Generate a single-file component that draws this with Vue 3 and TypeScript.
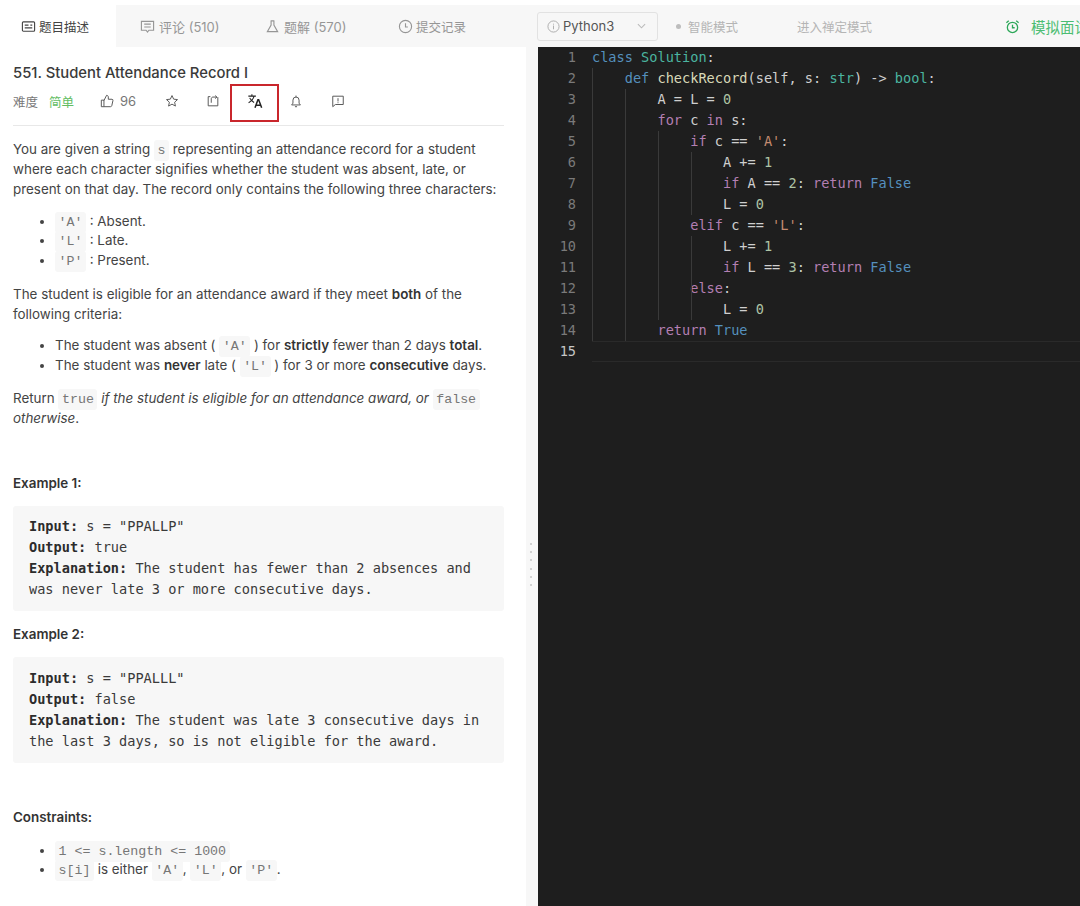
<script setup lang="ts">
interface Tok { t: string; c?: string }
const code: Tok[][] = [
  [{ t: 'class ', c: 'kw' }, { t: 'Solution', c: 'cls' }, { t: ':' }],
  [{ t: '    ' }, { t: 'def ', c: 'kw' }, { t: 'checkRecord', c: 'fn' }, { t: '(self, s: ' }, { t: 'str', c: 'cls' }, { t: ') -> ' }, { t: 'bool', c: 'cls' }, { t: ':' }],
  [{ t: '        A = L = ' }, { t: '0', c: 'num' }],
  [{ t: '        ' }, { t: 'for ', c: 'ctl' }, { t: 'c ' }, { t: 'in ', c: 'ctl' }, { t: 's:' }],
  [{ t: '            ' }, { t: 'if ', c: 'ctl' }, { t: 'c == ' }, { t: "'A'", c: 'str' }, { t: ':' }],
  [{ t: '                A += ' }, { t: '1', c: 'num' }],
  [{ t: '                ' }, { t: 'if ', c: 'ctl' }, { t: 'A == ' }, { t: '2', c: 'num' }, { t: ': ' }, { t: 'return ', c: 'ctl' }, { t: 'False', c: 'kw' }],
  [{ t: '                L = ' }, { t: '0', c: 'num' }],
  [{ t: '            ' }, { t: 'elif ', c: 'ctl' }, { t: 'c == ' }, { t: "'L'", c: 'str' }, { t: ':' }],
  [{ t: '                L += ' }, { t: '1', c: 'num' }],
  [{ t: '                ' }, { t: 'if ', c: 'ctl' }, { t: 'L == ' }, { t: '3', c: 'num' }, { t: ': ' }, { t: 'return ', c: 'ctl' }, { t: 'False', c: 'kw' }],
  [{ t: '            ' }, { t: 'else', c: 'ctl' }, { t: ':' }],
  [{ t: '                L = ' }, { t: '0', c: 'num' }],
  [{ t: '        ' }, { t: 'return ', c: 'ctl' }, { t: 'True', c: 'kw' }],
  [],
]
</script>

<template>
  <div class="page">
    <header class="topbar">
      <nav class="tabs">
        <div class="tab active">
          <svg class="ti" viewBox="0 0 16 16"><rect x="1.500" y="3" width="13" height="10" rx="1" /><path d="M4 6.500h4M4 9.500h8M10 6.500h2" /></svg>
          <span>题目描述</span>
        </div>
        <div class="tab">
          <svg class="ti" viewBox="0 0 16 16"><path d="M1.500 2.500h13v9.500H9.500L8 14l-1.500-2H1.500z" /><path d="M4.500 5.500h7M4.500 8.500h7" /></svg>
          <span>评论 (510)</span>
        </div>
        <div class="tab">
          <svg class="ti" viewBox="0 0 16 16"><path d="M6 2h4M6.500 2v4.500L2.500 13.500h11L9.500 6.500V2" /></svg>
          <span>题解 (570)</span>
        </div>
        <div class="tab">
          <svg class="ti" viewBox="0 0 16 16"><circle cx="8" cy="8" r="6.500" /><path d="M8 4.500V8.500H10.500" /></svg>
          <span>提交记录</span>
        </div>
      </nav>
      <div class="tools">
        <div class="lang">
          <svg class="info" viewBox="0 0 14 14"><circle cx="7" cy="7" r="6" /><path d="M7 6v4M7 4v1" /></svg>
          <span class="lang-name">Python3</span>
          <svg class="chev" viewBox="0 0 10 6"><path d="M1 1l4 4 4-4" /></svg>
        </div>
        <span class="mode"><i class="dot"></i>智能模式</span>
        <span class="zen">进入禅定模式</span>
        <span class="mock">
          <svg viewBox="0 0 16 16"><circle cx="8" cy="9" r="5.500" /><path d="M8 6v3.300h2.300M1.500 4L4 1.800M14.500 4L12 1.800" /></svg>
          <span>模拟面试</span>
        </span>
      </div>
    </header>

    <main class="body">
      <section class="left">
        <h1 class="title">551. Student Attendance Record I</h1>
        <div class="meta">
          <span class="lbl">难度</span>
          <span class="easy">简单</span>
          <span class="like">
            <svg class="mi" viewBox="0 0 16 16"><path d="M1.500 7h3v7.500h-3zM4.500 7.500L7.500 1.500c1.200 0 2 .8 2 2V6h4.200c.8 0 1.300.7 1.100 1.500l-1.300 5.700c-.2.800-.7 1.300-1.500 1.300H4.500" /></svg>
            <span>96</span>
          </span>
          <svg class="mi star" viewBox="0 0 16 16"><path d="M8 1.800l1.900 4.100 4.400.5-3.300 3 .9 4.400L8 11.600l-3.900 2.200.9-4.400-3.300-3 4.400-.5z" /></svg>
          <svg class="mi share" viewBox="0 0 16 16"><path d="M5 3H2.500v10.500h11V3.500" /><path d="M6 10V5.500C6 4.200 7 3.500 8 3.500h4M10.500 1.800l2 1.700-2 1.700" /></svg>
          <span class="trans">
            <svg viewBox="0 0 18 18"><path d="M1.500 3.500h8.500M5.500 1.300v2.200M8 3.500C7 7 4.500 9.500 1.800 11M3 5.500c1 2.200 2.800 4 5 5.200" /><path class="bold" d="M9 16.500L12.300 7.500h.8L16.500 16.500M10.300 13.800h5" /></svg>
          </span>
          <svg class="mi bell" viewBox="0 0 16 16"><path d="M3 12.500h10l-1.500-2V7a3.500 3.500 0 0 0-7 0v3.500zM8 1.800v1.700M6.800 14.500h2.400" /></svg>
          <svg class="mi flag" viewBox="0 0 16 16"><path d="M2 2.500h12v9.500H5L2 14.500z" /><path d="M8 4.800v3.700M8 9.500v1" /></svg>
        </div>
        <div class="rule"></div>

        <div class="desc">
          <p class="p1">You are given a string <code>s</code> representing an attendance record for a student where each character signifies whether the student was absent, late, or present on that day. The record only contains the following three characters:</p>
          <ul class="u1">
            <li><code>'A'</code> : Absent.</li>
            <li><code>'L'</code> : Late.</li>
            <li><code>'P'</code> : Present.</li>
          </ul>
          <p class="p2">The student is eligible for an attendance award if they meet <b>both</b> of the following criteria:</p>
          <ul class="u2">
            <li>The student was absent ( <code>'A'</code> ) for <b>strictly</b> fewer than 2 days <b>total</b>.</li>
            <li>The student was <b>never</b> late ( <code>'L'</code> ) for 3 or more <b>consecutive</b> days.</li>
          </ul>
          <p class="p3">Return <code>true</code> <em>if the student is eligible for an attendance award, or</em> <code>false</code> <em>otherwise</em>.</p>

          <h3 class="ex1">Example 1:</h3>
          <pre><b>Input:</b> s = "PPALLP"
<b>Output:</b> true
<b>Explanation:</b> The student has fewer than 2 absences and
was never late 3 or more consecutive days.</pre>
          <h3 class="ex2">Example 2:</h3>
          <pre class="pre2"><b>Input:</b> s = "PPALLL"
<b>Output:</b> false
<b>Explanation:</b> The student was late 3 consecutive days in
the last 3 days, so is not eligible for the award.</pre>
          <h3 class="cons">Constraints:</h3>
          <ul class="u3">
            <li><code>1 &lt;= s.length &lt;= 1000</code></li>
            <li><code>s[i]</code> is either <code>'A'</code>, <code>'L'</code>, or <code>'P'</code>.</li>
          </ul>
        </div>
      </section>

      <div class="gutter">
        <i></i><i></i><i></i><i></i><i></i><i></i>
      </div>

      <section class="editor">
        <div class="guides" aria-hidden="true">
          <i class="g1"></i><i class="g2"></i><i class="g3"></i><i class="g4"></i><i class="g5"></i>
        </div>
        <div v-for="(line, i) in code" :key="i" class="line" :class="{ current: i === 14 }">
          <span class="ln">{{ i + 1 }}</span>
          <span class="src"><span v-for="(tok, j) in line" :key="j" :class="tok.c">{{ tok.t }}</span></span>
        </div>
      </section>
    </main>
  </div>
</template>

<style>
html, body { margin: 0; padding: 0; background: #fff; overflow: hidden; }
</style>

<style scoped>
.page {
  width: 1080px;
  height: 906px;
  overflow: hidden;
  display: flex;
  flex-direction: column;
  padding-top: 5px;
  box-sizing: border-box;
  font-family: Inter, "Noto Sans CJK SC", sans-serif;
  color: #333;
}
.topbar { height: 42px; display: flex; background: #f7f7f7; flex: none; }
.tabs { width: 526px; display: flex; flex: none; }
.tab { display: flex; align-items: center; gap: 4px; font-size: 13px; color: #969696; height: 42px; box-sizing: border-box; }
.tab:nth-child(1) { width: 116px; padding-left: 21px; gap: 3px; font-size: 12.5px; background: #fff; color: #444; }
.tab:nth-child(2) { width: 117px; padding-left: 24px; }
.tab:nth-child(3) { width: 131px; padding-left: 32px; }
.tab:nth-child(4) { padding-left: 34px; gap: 3px; font-size: 12.5px; }
.ti { width: 15px; height: 15px; fill: none; stroke: currentColor; stroke-width: 1.2; flex: none; }
.tools { flex: 1; display: flex; align-items: center; min-width: 0; white-space: nowrap; overflow: hidden; }
.lang {
  margin-left: 11px;
  width: 121px;
  height: 29px;
  box-sizing: border-box;
  border: 1px solid #e2e2e2;
  border-radius: 3px;
  background: #f7f7f7;
  display: flex;
  align-items: center;
  padding-left: 9px;
  font-size: 13px;
  color: #555;
  flex: none;
}
.info { width: 13px; height: 13px; fill: none; stroke: #aaa; stroke-width: 1; margin-right: 3px; }
.lang-name { flex: 1; }
.chev { width: 9px; height: 6px; fill: none; stroke: #bbb; stroke-width: 1.2; margin-right: 11px; }
.mode { margin-left: 18px; font-size: 12.5px; color: #b5b5b5; display: flex; align-items: center; flex: none; }
.dot { width: 5px; height: 5px; border-radius: 50%; background: #bdbdbd; margin-right: 7px; }
.zen { margin-left: 59px; font-size: 12.5px; color: #b5b5b5; flex: none; }
.mock { margin-left: 133px; display: flex; align-items: center; gap: 11px; font-size: 14.5px; color: #4cbd72; flex: none; }
.mock svg { width: 15px; height: 15px; fill: none; stroke: #2ea85a; stroke-width: 1.4; }

.body { flex: 1; display: flex; min-height: 0; }
.left { width: 526px; flex: none; padding: 16px 22px 0 13px; box-sizing: border-box; background: #fff; overflow: hidden; }
.title { margin: 0; font-size: 14.8px; font-weight: 500; line-height: 20px; color: #3a3a3a; }
.meta { display: flex; align-items: center; height: 34px; margin-top: 1px; font-size: 12.5px; color: #777; }
.lbl { width: 36px; flex: none; }
.easy { width: 51px; flex: none; color: #62bd62; }
.like { display: flex; align-items: center; gap: 6px; width: 65px; flex: none; color: #777; font-size: 13px; }
.mi { width: 14px; height: 14px; fill: none; stroke: #555; stroke-width: 1.1; flex: none; }
.star { margin-right: 27px; }
.share { margin-right: 10px; }
.trans {
  width: 49px;
  height: 38px;
  flex: none;
  align-self: flex-start;
  border: 2px solid #c9262c;
  box-sizing: border-box;
  display: flex;
  align-items: center;
  justify-content: center;
  padding-bottom: 4px;
  margin-right: 10px;
}
.trans svg { width: 16px; height: 16px; fill: none; stroke: #222; stroke-width: 1.2; }
.trans .bold { stroke-width: 1.7; }
.bell { margin-right: 28px; }
.rule { height: 1px; background: #e8e8e8; margin-top: 7px; }

.desc { font-size: 13.4px; line-height: 19.8px; color: #444; }
.desc p, .desc ul { margin: 0; }
.desc ul { padding: 0 0 0 42px; }
.desc .p1 { margin-top: 14px; }
.desc .u1 { margin-top: 12.3px; }
.desc .p2 { margin-top: 14px; }
.desc .u2 { margin-top: 11.6px; }
.desc .p3 { margin-top: 13.600px; }
.desc .u3 { margin-top: 13.600px; }
code {
  font-family: "Liberation Mono", monospace;
  font-size: 13.3px;
  line-height: 1;
  color: #767676;
  background: #f7f7f7;
  padding: 3px 3.500px;
  border-radius: 3px;
}
b { font-weight: 600; color: #333; }
em { font-style: italic; }
h3 { margin: 0; font-size: 13.4px; font-weight: 600; line-height: 20px; color: #333; }
.ex1 { margin-top: 44px; }
.ex2 { margin-top: 13px; }
.cons { margin-top: 44px; }
pre {
  margin: 13px 0 0;
  padding: 10px 16px 11px;
  background: #f7f7f7;
  border-radius: 3px;
  font-family: "DejaVu Sans Mono", monospace;
  font-size: 13.6px;
  line-height: 21px;
  color: #3a3a3a;
  white-space: pre;
}
.pre2 { padding-top: 11px; }
pre b { font-weight: 700; color: #2c2c2c; }

.gutter {
  width: 12px;
  flex: none;
  background: #f7f7f7;
  display: flex;
  flex-direction: column;
  align-items: center;
  justify-content: center;
  gap: 6.400px;
  padding: 176px 2px 0 0;
  box-sizing: border-box;
}
.gutter i { width: 2px; height: 2px; border-radius: 50%; background: #c6c6c6; }

.editor {
  flex: 1;
  min-width: 0;
  background: #1e1e1e;
  position: relative;
  font-family: "DejaVu Sans Mono", monospace;
  font-size: 13.6px;
  color: #cfcfcf;
  overflow: hidden;
}
.line { height: 21px; line-height: 21px; display: flex; white-space: pre; }
.ln { width: 38px; text-align: right; color: #7a7a7a; flex: none; }
.src { margin-left: 16px; }
.current .ln { color: #c6c6c6; }
.current .src { flex: 1; border-top: 1px solid #2a2a2a; border-bottom: 1px solid #2a2a2a; box-sizing: border-box; }
.kw { color: #5590bd; }
.cls { color: #4bb5a0; }
.fn { color: #d8d8b8; }
.num { color: #aec4a5; }
.ctl { color: #b47fb2; }
.str { color: #c48b70; }
.guides { position: absolute; inset: 0; pointer-events: none; }
.guides i { position: absolute; width: 1px; background: #3a3a3a; }
.g1 { left: 54px; top: 21px; height: 273px; }
.g2 { left: 87px; top: 42px; height: 252px; }
.g3 { left: 120px; top: 84px; height: 189px; }
.g4 { left: 153px; top: 105px; height: 63px; }
.g5 { left: 153px; top: 189px; height: 84px; }
</style>
